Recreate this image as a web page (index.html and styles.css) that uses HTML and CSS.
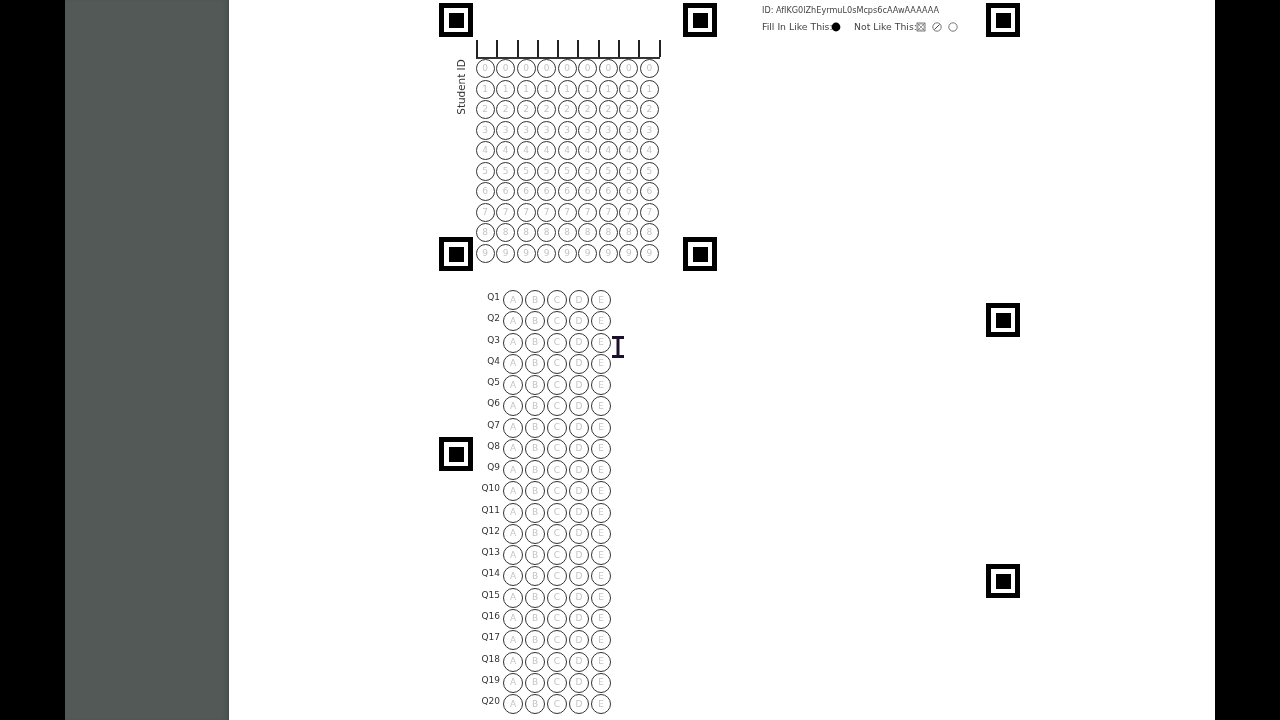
FILE: index.html
```html
<!DOCTYPE html>
<html lang="en">
<head>
<meta charset="utf-8">
<title>Answer sheet</title>
<link rel="stylesheet" href="styles.css">
</head>
<body>
<div class="frame">
  <div class="letterbox"></div>
  <div class="viewer-bg"></div>
  <main class="paper">
    <div class="marker m-a"></div>
    <div class="marker m-b"></div>
    <div class="marker m-c"></div>
    <div class="marker m-d"></div>
    <div class="marker m-e"></div>
    <div class="marker m-f"></div>
    <div class="marker m-g"></div>
    <div class="marker m-h"></div>

    <section class="legend">
      <div class="legend-id">ID: AfIKG0lZhEyrmuL0sMcps6cAAwAAAAAA</div>
      <div class="legend-row">
        <span class="fill-label">Fill In Like This:</span>
        <svg class="mark fill-mark" viewBox="0 0 10 10"><circle cx="5" cy="5" r="4.4" fill="#000"/></svg>
        <span class="not-label">Not Like This:</span>
        <svg class="mark box-mark" viewBox="0 0 10 10"><rect x="1" y="1" width="8" height="8" fill="none" stroke="#444" stroke-width=".7"/><circle cx="5" cy="5" r="3.2" fill="none" stroke="#555" stroke-width=".5"/><path d="M1.5 1.5L8.5 8.5M8.5 1.5L1.5 8.5" stroke="#444" stroke-width=".55"/></svg>
        <svg class="mark slash-mark" viewBox="0 0 10 10"><circle cx="5" cy="5" r="4.2" fill="none" stroke="#555" stroke-width=".8"/><path d="M2.5 7.5L7.5 2.5" stroke="#444" stroke-width="1"/></svg>
        <svg class="mark empty-mark" viewBox="0 0 10 10"><circle cx="5" cy="5" r="4.2" fill="none" stroke="#555" stroke-width=".8"/></svg>
      </div>
    </section>

    <section class="student">
      <div class="student-label">Student ID</div>
      <div class="id-boxes">
        <i></i><i></i><i></i><i></i><i></i><i></i><i></i><i></i><i></i>
      </div>
      <div class="id-grid">
        <b>0</b><b>0</b><b>0</b><b>0</b><b>0</b><b>0</b><b>0</b><b>0</b><b>0</b>
        <b>1</b><b>1</b><b>1</b><b>1</b><b>1</b><b>1</b><b>1</b><b>1</b><b>1</b>
        <b>2</b><b>2</b><b>2</b><b>2</b><b>2</b><b>2</b><b>2</b><b>2</b><b>2</b>
        <b>3</b><b>3</b><b>3</b><b>3</b><b>3</b><b>3</b><b>3</b><b>3</b><b>3</b>
        <b>4</b><b>4</b><b>4</b><b>4</b><b>4</b><b>4</b><b>4</b><b>4</b><b>4</b>
        <b>5</b><b>5</b><b>5</b><b>5</b><b>5</b><b>5</b><b>5</b><b>5</b><b>5</b>
        <b>6</b><b>6</b><b>6</b><b>6</b><b>6</b><b>6</b><b>6</b><b>6</b><b>6</b>
        <b>7</b><b>7</b><b>7</b><b>7</b><b>7</b><b>7</b><b>7</b><b>7</b><b>7</b>
        <b>8</b><b>8</b><b>8</b><b>8</b><b>8</b><b>8</b><b>8</b><b>8</b><b>8</b>
        <b>9</b><b>9</b><b>9</b><b>9</b><b>9</b><b>9</b><b>9</b><b>9</b><b>9</b>
      </div>
    </section>

    <section class="questions">
      <span>Q1</span><b>A</b><b>B</b><b>C</b><b>D</b><b>E</b>
      <span>Q2</span><b>A</b><b>B</b><b>C</b><b>D</b><b>E</b>
      <span>Q3</span><b>A</b><b>B</b><b>C</b><b>D</b><b>E</b>
      <span>Q4</span><b>A</b><b>B</b><b>C</b><b>D</b><b>E</b>
      <span>Q5</span><b>A</b><b>B</b><b>C</b><b>D</b><b>E</b>
      <span>Q6</span><b>A</b><b>B</b><b>C</b><b>D</b><b>E</b>
      <span>Q7</span><b>A</b><b>B</b><b>C</b><b>D</b><b>E</b>
      <span>Q8</span><b>A</b><b>B</b><b>C</b><b>D</b><b>E</b>
      <span>Q9</span><b>A</b><b>B</b><b>C</b><b>D</b><b>E</b>
      <span>Q10</span><b>A</b><b>B</b><b>C</b><b>D</b><b>E</b>
      <span>Q11</span><b>A</b><b>B</b><b>C</b><b>D</b><b>E</b>
      <span>Q12</span><b>A</b><b>B</b><b>C</b><b>D</b><b>E</b>
      <span>Q13</span><b>A</b><b>B</b><b>C</b><b>D</b><b>E</b>
      <span>Q14</span><b>A</b><b>B</b><b>C</b><b>D</b><b>E</b>
      <span>Q15</span><b>A</b><b>B</b><b>C</b><b>D</b><b>E</b>
      <span>Q16</span><b>A</b><b>B</b><b>C</b><b>D</b><b>E</b>
      <span>Q17</span><b>A</b><b>B</b><b>C</b><b>D</b><b>E</b>
      <span>Q18</span><b>A</b><b>B</b><b>C</b><b>D</b><b>E</b>
      <span>Q19</span><b>A</b><b>B</b><b>C</b><b>D</b><b>E</b>
      <span>Q20</span><b>A</b><b>B</b><b>C</b><b>D</b><b>E</b>
    </section>

    <svg class="cursor" viewBox="0 0 12 22"><path d="M0 1.5H12M6 1.5V20.5M0 20.5H12" fill="none" stroke="#1c0f2e" stroke-width="3"/></svg>
  </main>
  <div class="letterbox"></div>
</div>
</body>
</html>
```
FILE: styles.css
```css
* { box-sizing: border-box; }
html, body { margin: 0; height: 100%; overflow: hidden; background: #000; }
.frame { display: flex; width: 1280px; height: 720px; font-family: "DejaVu Sans", sans-serif; }
.letterbox { flex: 0 0 65px; background: #000; }
.viewer-bg { flex: 0 0 164px; background: #525956; box-shadow: inset -5px 0 4px -3px #454b49; }
.paper { position: relative; flex: 0 0 986px; height: 720px; background: #fff; overflow: hidden; filter: blur(.45px); }

/* Page origin is x=229 */
.marker { position: absolute; width: 34px; height: 34px; border: 5px solid #000; background: #fff; display: flex; align-items: center; justify-content: center; }
.marker::after { content: ""; width: 15px; height: 15px; background: #000; }
.m-a { left: 210px; top: 3px; }
.m-b { left: 454px; top: 3px; }
.m-c { left: 757px; top: 3px; }
.m-d { left: 210px; top: 237px; }
.m-e { left: 454px; top: 237px; }
.m-f { left: 757px; top: 303px; }
.m-g { left: 210px; top: 437px; }
.m-h { left: 757px; top: 564px; }

.legend { position: absolute; left: 533px; top: 4px; width: 210px; color: #444; font-size: 9px; }
.legend-id { height: 13px; line-height: 13px; white-space: nowrap; font-size: 8.15px; }
.legend-row { position: relative; height: 14px; margin-top: 3px; line-height: 14px; font-size: 9.3px; white-space: nowrap; }
.fill-label { position: absolute; left: 0; }
.not-label { position: absolute; left: 92px; }
.mark { position: absolute; top: 2px; width: 10px; height: 10px; }
.fill-mark { left: 69px; }
.box-mark { left: 154px; }
.slash-mark { left: 170px; }
.empty-mark { left: 186px; }

.student { position: absolute; left: 247px; top: 40px; }
.student-label { position: absolute; left: -43px; top: 40px; width: 56px; height: 14px; line-height: 14px; text-align: center; font-size: 10.4px; color: #333; white-space: nowrap; transform: rotate(-90deg); }
.id-boxes { display: grid; grid-template-columns: repeat(9, 20.3px); width: 184px; height: 19px; border-left: 2px solid #222; border-bottom: 2px solid #333; }
.id-boxes i { border-right: 2px solid #222; }
.id-grid { display: grid; grid-template-columns: repeat(9, 19px); grid-auto-rows: 19px; gap: 1.55px; margin-left: -.5px; }

.id-grid b, .questions b { display: flex; align-items: center; justify-content: center; border: 1.6px solid #333; border-radius: 50%; color: #c4c4c4; font-weight: 400; font-size: 9px; line-height: 1; }

.questions { position: absolute; left: 246px; top: 290px; display: grid; grid-template-columns: 26px repeat(5, 20px); column-gap: 2px; grid-auto-rows: 20px; row-gap: 1.28px; }
.questions span { color: #333; font-size: 9px; line-height: 14px; text-align: right; padding-right: 1px; height: 14px; }

.cursor { position: absolute; left: 383px; top: 336px; width: 12px; height: 22px; }
```
